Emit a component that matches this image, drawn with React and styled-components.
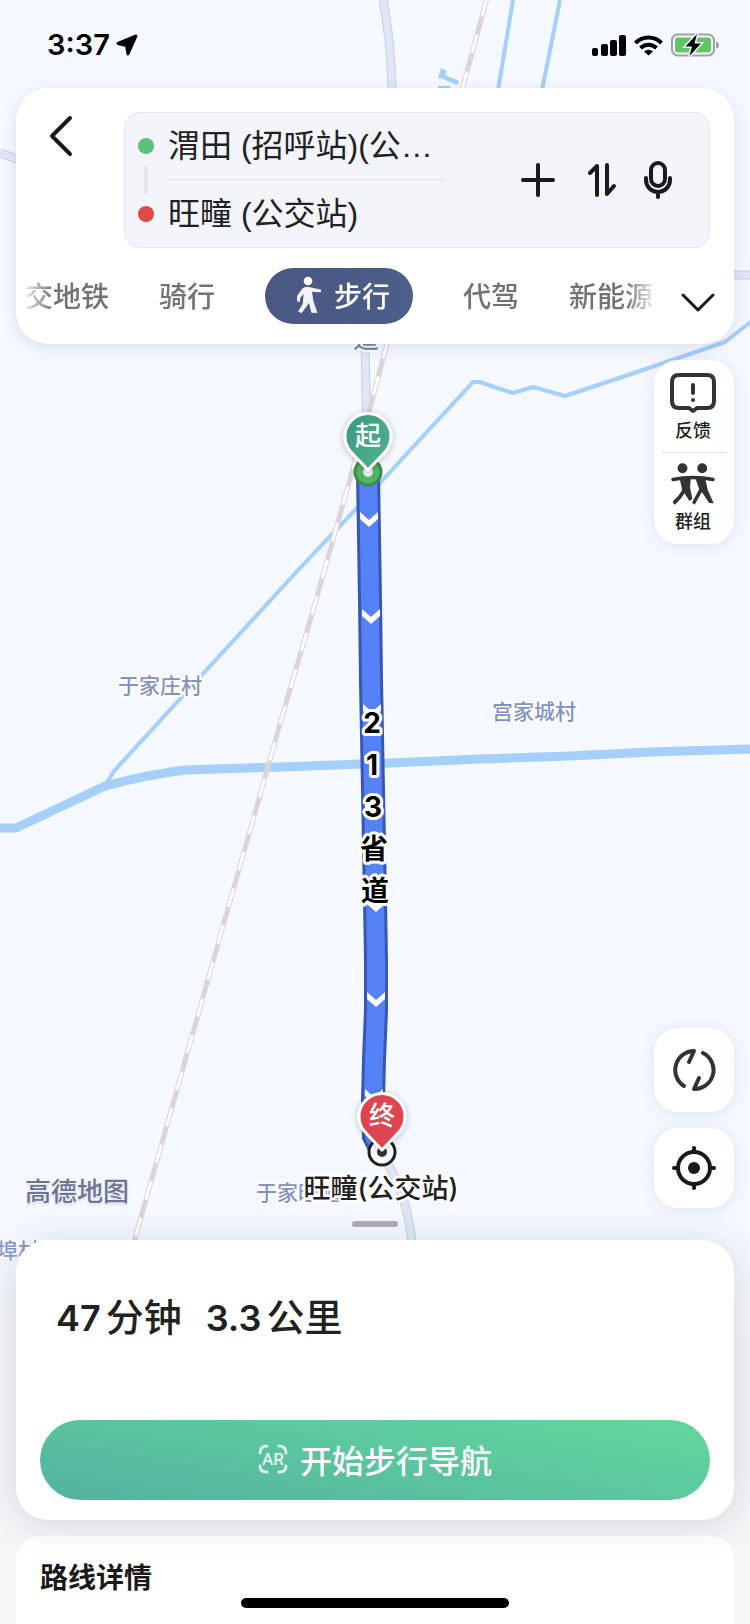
import React from "react";
import styled, { createGlobalStyle, css } from "styled-components";

const GlobalStyle = createGlobalStyle`
  * { box-sizing: border-box; }
  body {
    margin: 0;
    background: #f5f6f8;
    color: #222;
    font-family: Inter, "Noto Sans CJK SC", sans-serif;
  }
  button, input { font: inherit; color: inherit; }
  svg { display: block; }
`;

const Page = styled.div`
  position: relative;
  isolation: isolate;
  display: flex;
  flex-direction: column;
  min-height: 100vh;
  overflow: hidden;
  background: #f5f8ff;
`;

const MapCanvas = styled.svg`
  position: absolute;
  inset: 0;
  z-index: -1;
  width: 100%;
  height: 100%;
`;

const StatusBar = styled.header`
  display: flex;
  align-items: center;
  justify-content: space-between;
  height: 88px;
  padding: 2px 30px 0 47px;
  color: #000;
`;

const StatusGroup = styled.div`
  display: flex;
  align-items: center;
  gap: ${(p) => p.$gap}px;
`;

const Clock = styled.time`
  font-size: 29px;
  font-weight: 600;
  line-height: 32px;
`;

const RouteCard = styled.section`
  margin: 0 16px;
  padding: 24px 0 20px;
  border-radius: 32px;
  background: #fff;
  box-shadow: 0 4px 16px rgba(40, 50, 80, 0.12);
`;

const RouteTop = styled.div`
  display: flex;
  align-items: flex-start;
  padding: 0 24px 0 16px;
`;

const IconButton = styled.button`
  display: flex;
  align-items: center;
  justify-content: center;
  flex: none;
  width: ${(p) => p.$width}px;
  height: ${(p) => p.$height}px;
  padding: 0;
  border: 0;
  background: none;
  color: #1a1a1a;
`;

const MoreButton = styled(IconButton)`
  align-items: flex-end;
  padding-bottom: 12px;
`;

const FieldBox = styled.div`
  display: flex;
  align-items: center;
  flex: 1;
  min-width: 0;
  height: 136px;
  margin-left: 34px;
  padding: 0 35px 0 13px;
  border: 1px solid #e6e7eb;
  border-radius: 16px;
  background: #f4f5fa;
`;

const RouteMarks = styled.div`
  display: flex;
  flex-direction: column;
  align-items: center;
  gap: 12px;
  flex: none;
`;

const Dot = styled.span`
  width: 16px;
  height: 16px;
  border-radius: 50%;
  background: ${(p) => p.$color};
`;

const Connector = styled.span`
  width: 4px;
  height: 28px;
  background: #e6e6ea;
`;

const Fields = styled.div`
  flex: 1;
  min-width: 0;
  margin-left: 14px;
`;

const Field = styled.input`
  display: block;
  width: 100%;
  height: 68px;
  padding: 0 0 5px;
  border: 0;
  border-bottom: 1px solid ${(p) => (p.$last ? "transparent" : "#e3e4e8")};
  outline: 0;
  background: none;
  color: #222;
  font-family: "Liberation Sans", "Noto Sans CJK SC", sans-serif;
  font-size: 32px;
`;

const FieldActions = styled.div`
  display: flex;
  align-items: center;
  gap: 16px;
  flex: none;
  margin-left: 70px;
`;

const TabRow = styled.div`
  display: flex;
  align-items: center;
  justify-content: space-between;
  margin-top: 20px;
  padding: 0 16px 0 9px;
`;

const Tabs = styled.nav`
  display: flex;
  align-items: center;
  gap: 50px;
  min-width: 0;
  overflow: hidden;
  mask-image: linear-gradient(90deg, rgba(0, 0, 0, 0.15), #000 28px, #000 calc(100% - 28px), rgba(0, 0, 0, 0.15));
`;

const Tab = styled.button`
  display: flex;
  align-items: center;
  justify-content: center;
  flex: none;
  gap: 12px;
  height: 56px;
  padding: 0 0 2px;
  border: 0;
  background: none;
  color: #737373;
  font-size: 28px;
  font-weight: 500;
  white-space: nowrap;
  ${(p) =>
    p.$active &&
    css`
      width: 148px;
      padding-left: 8px;
      border-radius: 28px;
      background: linear-gradient(90deg, #485882, #4d5e8a);
      color: #fff;
    `}
`;

const MapArea = styled.main`
  display: flex;
  flex: 1;
  flex-direction: column;
  justify-content: space-between;
  min-height: 560px;
  padding: 16px 16px 13px;
`;

const floating = css`
  border: 0;
  border-radius: 24px;
  background: #fff;
  box-shadow: 0 2px 16px rgba(40, 50, 80, 0.1);
`;

const ToolPanel = styled.div`
  ${floating}
  align-self: flex-end;
  width: 80px;
  padding: 0 8px;
`;

const ToolButton = styled.button`
  display: flex;
  flex-direction: column;
  align-items: center;
  gap: 5px;
  width: 100%;
  height: 92px;
  padding: ${(p) => (p.$divided ? 10 : 12)}px 2px 0 0;
  border: 0;
  border-top: ${(p) => (p.$divided ? "1px solid #e2e2e4" : "0")};
  background: none;
  color: #222;
  font-size: 18px;
  font-weight: 500;
  line-height: 24px;
`;

const MapFooter = styled.div`
  display: flex;
  flex-direction: column;
  gap: 13px;
`;

const MapFooterRow = styled.div`
  display: flex;
  align-items: flex-end;
  justify-content: space-between;
`;

const Watermark = styled.span`
  margin-left: 9px;
  color: #6c7694;
  font-size: 26px;
  font-weight: 500;
  line-height: 32px;
  text-shadow: 0 1px 2px #fff, 0 2px 2px rgba(60, 70, 100, 0.25);
`;

const Controls = styled.div`
  display: flex;
  flex-direction: column;
  gap: 16px;
`;

const ControlButton = styled.button`
  ${floating}
  display: flex;
  align-items: center;
  justify-content: center;
  width: 80px;
  height: ${(p) => p.$height}px;
  padding: 0;
`;

const Handle = styled.span`
  align-self: center;
  width: 46px;
  height: 6px;
  border-radius: 3px;
  background: #adaeb3;
`;

const SheetStack = styled.div`
  position: relative;
  display: flex;
  flex-direction: column;
  gap: 16px;
  padding: 0 16px;
  background: linear-gradient(rgba(245, 246, 248, 0), #f5f6f8 100px);
`;

const Summary = styled.section`
  position: relative;
  padding: 54px 24px 20px;
  border-radius: 32px;
  background: #fff;
  box-shadow: 0 4px 36px rgba(50, 54, 66, 0.17);
`;

const SummaryFigures = styled.h1`
  display: flex;
  gap: 24px;
  height: 46px;
  margin: 0 0 80px 16px;
  font-size: 36px;
  font-weight: 600;
  line-height: 46px;
`;

const Figure = styled.span`
  display: flex;
  align-items: baseline;
  gap: 5px;
`;

const Unit = styled.span`
  font-size: 38px;
  font-weight: 500;
`;

const StartButton = styled.button`
  display: flex;
  align-items: center;
  justify-content: center;
  gap: 12px;
  width: 100%;
  height: 80px;
  padding: 0 0 2px;
  border: 0;
  border-radius: 40px;
  background: linear-gradient(10deg, #54b59f 8%, #5bc59f 50%, #61d59d 92%);
  color: #fff;
  font-size: 32px;
  font-weight: 500;
`;

const Details = styled.section`
  height: 88px;
  padding: 25px 24px 0;
  border-radius: 24px 24px 0 0;
  background: #fff;
`;

const DetailsTitle = styled.h2`
  margin: 0;
  color: #1a1a1a;
  font-size: 28px;
  font-weight: 600;
  line-height: 34px;
`;

const HomeIndicator = styled.div`
  position: absolute;
  bottom: 16px;
  left: 50%;
  width: 268px;
  height: 10px;
  border-radius: 5px;
  background: #000;
  transform: translateX(-50%);
`;

const PlaceText = styled.text`
  fill: ${(p) => p.$color || "#8292c2"};
  stroke: #fff;
  stroke-width: ${(p) => p.$halo || 4}px;
  stroke-linejoin: round;
  paint-order: stroke;
  text-anchor: middle;
  font-size: ${(p) => p.$size || 21}px;
  font-weight: ${(p) => p.$weight || 500};
`;

const PinText = styled.text`
  fill: #fff;
  text-anchor: middle;
  font-size: 26px;
  font-weight: 500;
`;

const ROUTE = "M368 472L370 600L371 680L375 900L376 960L376 1010L374 1060L373 1100L374 1136L382 1152";
const CHEVRONS = [[369, 519], [371, 616], [372, 711], [374, 808], [376, 904], [376, 999], [374, 1096]];
const ROAD_NAME = [["2", 372, 733], ["1", 372, 775], ["3", 373, 817], ["省", 374, 859], ["道", 375, 901]];
const PLACES = [["于家庄村", 160, 693], ["宫家城村", 534, 719], ["于家旺疃", 298, 1200], ["埠村", 18, 1258]];
const ROADS = [
  "M383 0Q391 40 392 90",
  "M365 340L367 440",
  "M384 1158C402 1186 409 1212 413 1250",
  "M0 153L20 160",
  "M730 275L750 275",
];

function Pin({ x, y, fill, children }) {
  return (
    <g transform={`translate(${x} ${y})`}>
      <path
        d="M0 34L-17 16A23 23 0 1 1 17 16Z"
        fill={fill}
        stroke="#fff"
        strokeWidth="3"
        strokeLinejoin="round"
        filter="url(#pinShadow)"
      />
      <PinText y="9">{children}</PinText>
    </g>
  );
}

function RouteMap() {
  return (
    <MapCanvas viewBox="0 0 750 1624" preserveAspectRatio="xMidYMid slice">
      <defs>
        <filter id="pinShadow" x="-30%" y="-30%" width="160%" height="160%">
          <feDropShadow dx="0" dy="1" stdDeviation="3" floodOpacity="0.25" />
        </filter>
        <linearGradient id="startFill" x1="0" y1="0" x2="1" y2="1">
          <stop offset="0" stopColor="#3c977a" />
          <stop offset="1" stopColor="#4db694" />
        </linearGradient>
      </defs>
      <g fill="none">
        {ROADS.map((d) => (
          <g key={d}>
            <path d={d} stroke="#c6d0e5" strokeWidth="9" />
            <path d={d} stroke="#dfe7f6" strokeWidth="7" />
          </g>
        ))}
        <g stroke="#a6cffb" strokeLinejoin="round">
          <path d="M0 828H16L105 786Q145 775 185 770L280 767L390 763L480 759L570 756L650 752L750 749" strokeWidth="9" />
          <path d="M105 786L114 771L300 568L356 509L473 382H480L500 389L513 393L533 387L565 396L640 371L725 342L752 321" strokeWidth="4" />
          <path d="M513 0L498 90M560 0L542 90" strokeWidth="4" />
        </g>
        {["M487 -2L462 90", "M388 340L370 408L316 600L280 724L134 1242"].map((d) => (
          <g key={d}>
            <path d={d} stroke="#dbd5d9" strokeWidth="5" />
            <path d={d} stroke="#fff" strokeWidth="3" strokeDasharray="19 19" />
          </g>
        ))}
        <path d="M438 78L441 68L447 71L445 75L459 81L457 85L443 79ZM438 86H450V90H438Z" fill="#a6cffb" />
        <path d={ROUTE} stroke="#3858b0" strokeWidth="24" />
        <path d={ROUTE} stroke="#5682f8" strokeWidth="18" />
      </g>
      {CHEVRONS.map(([x, y]) => (
        <path key={y} transform={`translate(${x} ${y})`} d="M-9 -7L0 1L9 -7V0L0 8L-9 0Z" fill="#fff" />
      ))}
      <PlaceText x="366" y="348" $color="#7c88ab" $size={26}>道</PlaceText>
      {PLACES.map(([name, x, y]) => (
        <PlaceText key={name} x={x} y={y}>{name}</PlaceText>
      ))}
      {ROAD_NAME.map(([char, x, y]) => (
        <PlaceText key={char} x={x} y={y} $color="#000" $size={28} $weight={700} $halo={6}>{char}</PlaceText>
      ))}
      <circle cx="368" cy="472" r="13" fill="#54b267" stroke="#3b8d4e" strokeWidth="3" />
      <circle cx="368" cy="472" r="5" fill="#e3f3e6" />
      <circle cx="382" cy="1152" r="13" fill="#fff" stroke="#222" strokeWidth="3" />
      <circle cx="382" cy="1152" r="5" fill="#333" />
      <Pin x={368} y={436} fill="url(#startFill)">起</Pin>
      <Pin x={382} y={1116} fill="#de444f">终</Pin>
      <PlaceText x="381" y="1198" $color="#222" $size={27} $weight={500} $halo={5}>旺疃(公交站)</PlaceText>
    </MapCanvas>
  );
}

const LocationArrow = () => (
  <svg width="22" height="22" viewBox="0 0 22 22">
    <path d="M20 2L2 9.5L10.500 11.500L12 20Z" fill="#000" stroke="#000" strokeWidth="3" strokeLinejoin="round" />
  </svg>
);

const Signal = () => (
  <svg width="34" height="21" viewBox="0 0 34 21">
    <rect y="13" width="6" height="8" rx="2" />
    <rect x="9" y="9" width="7" height="12" rx="2" />
    <rect x="18" y="5" width="7" height="16" rx="2" />
    <rect x="27" width="7" height="21" rx="2" />
  </svg>
);

const Wifi = () => (
  <svg width="29" height="21" viewBox="0 0 29 21">
    <g fill="none" stroke="#000" strokeWidth="4">
      <path d="M1.500 8A18 18 0 0 1 27.500 8" />
      <path d="M6.500 13A11.500 11.500 0 0 1 22.500 13" />
    </g>
    <path d="M14.500 20.500L10 16.500Q14.500 13 19 16.500Z" />
  </svg>
);

const Battery = () => (
  <svg width="49" height="24" viewBox="0 0 49 24">
    <rect x="1" y="1.500" width="42" height="21" rx="6" fill="none" stroke="#9fa1a6" strokeWidth="2" />
    <rect x="4" y="4.500" width="36" height="15" rx="3" fill="#65c466" />
    <path d="M45 8.500Q48 9 48 12T45 15.500Z" fill="#9fa1a6" />
    <path d="M26 1L14.500 13.500H21L18.500 23L30 10.500H23.500Z" fill="#000" stroke="#f4f8ff" strokeWidth="3" paintOrder="stroke" />
  </svg>
);

const line = { fill: "none", stroke: "currentColor", strokeLinecap: "round", strokeLinejoin: "round" };

const BackIcon = () => (
  <svg width="24" height="42" viewBox="0 0 24 42" {...line} strokeWidth="4">
    <path d="M21 3L3 21L21 39" />
  </svg>
);
const PlusIcon = () => (
  <svg width="34" height="34" viewBox="0 0 34 34" {...line} strokeWidth="4">
    <path d="M2 17H32M17 2V32" />
  </svg>
);
const SwapIcon = () => (
  <svg width="30" height="34" viewBox="0 0 30 34" {...line} strokeWidth="4">
    <path d="M3 10L10 3V32M20 2V31L27 23" />
  </svg>
);
const MicIcon = () => (
  <svg width="30" height="40" viewBox="0 0 30 40" {...line} strokeWidth="4">
    <rect x="8" y="3" width="14" height="23" rx="7" />
    <path d="M3 18V20A12 12 0 0 0 27 20V18M15 33V37" />
  </svg>
);
const DownIcon = () => (
  <svg width="34" height="20" viewBox="0 0 34 20" {...line} strokeWidth="3">
    <path d="M2 3L17 18L32 3" />
  </svg>
);
const WalkIcon = () => (
  <svg width="26" height="38" viewBox="0 0 78 114" fill="#fff">
    <circle cx="36" cy="15" r="13" />
    <path d="M20 37Q30 29 42 34L76 41L74 49L48 47L52 74L64 111L46 110L39 81L30 94L17 111L6 107L20 84L23 54L13 65L11 78L3 76V60Z" fillOpacity="0.93" />
  </svg>
);
const FeedbackIcon = () => (
  <svg width="46" height="42" viewBox="0 -1 46 42" fill="none" stroke="#333" strokeWidth="4" strokeLinecap="round" strokeLinejoin="round">
    <path d="M9 2H37Q44 2 44 9V28Q44 35 37 35H27L23 38L19 35H9Q2 35 2 28V9Q2 2 9 2Z" />
    <path d="M23 12V20M23 27V27.100" />
  </svg>
);
const GroupIcon = () => (
  <svg width="46" height="42" viewBox="0 2 138 128" fill="#333">
    <circle cx="37" cy="18" r="15" />
    <circle cx="97" cy="18" r="15" />
    <path d="M8 52Q70 40 130 52" fill="none" stroke="#333" strokeWidth="11" strokeLinecap="round" />
    <path d="M28 48H62L60 76L67 111L58 118L43 94L34 108L14 129L7 123L10 116L25 101L36 84Z" />
    <path d="M76 48H106L114 84L132 125L118 124L96 90L74 129L66 123L78 100L88 82Z" />
  </svg>
);
const RefreshIcon = () => (
  <svg width="44" height="44" viewBox="0 0 44 44" fill="none" stroke="#333" strokeWidth="4" strokeLinecap="round" strokeLinejoin="round">
    <path d="M12 38A19 19 0 0 1 22 3L17 14M31 5A19 19 0 0 1 22 41L27 30" />
  </svg>
);
const LocateIcon = () => (
  <svg width="44" height="44" viewBox="0 0 44 44" fill="none" stroke="#1a1a1a" strokeWidth="4" strokeLinecap="round">
    <circle cx="22" cy="22" r="16" />
    <circle cx="22" cy="22" r="6" fill="#1a1a1a" stroke="none" />
    <path d="M22 2V6M22 38V42M2 22H6M38 22H42" />
  </svg>
);

const ArText = styled.text`
  fill: #e6f6f0;
  stroke: none;
  text-anchor: middle;
  font-family: Roboto, sans-serif;
  font-size: 17px;
  font-weight: 500;
`;

const ArIcon = () => (
  <svg width="30" height="30" viewBox="0 0 30 30" fill="none" stroke="#d9f1e9" strokeWidth="3" strokeLinecap="round">
    <path d="M2 9Q2 2 9 2M21 2Q28 2 28 9M28 22Q28 28 21 28M9 28Q2 28 2 22" />
    <ArText x="15" y="21">AR</ArText>
  </svg>
);

export default function App() {
  return (
    <Page>
      <GlobalStyle />
      <RouteMap />
      <StatusBar>
        <StatusGroup $gap={6}>
          <Clock>3:37</Clock>
          <LocationArrow />
        </StatusGroup>
        <StatusGroup $gap={8}>
          <Signal />
          <Wifi />
          <Battery />
        </StatusGroup>
      </StatusBar>

      <RouteCard>
        <RouteTop>
          <IconButton $width={58} $height={48} aria-label="返回"><BackIcon /></IconButton>
          <FieldBox>
            <RouteMarks>
              <Dot $color="#5bc278" />
              <Connector />
              <Dot $color="#de4941" />
            </RouteMarks>
            <Fields>
              <Field aria-label="起点" defaultValue="渭田 (招呼站)(公…" />
              <Field $last aria-label="终点" defaultValue="旺疃 (公交站)" />
            </Fields>
            <FieldActions>
              <IconButton $width={48} $height={48} aria-label="添加途经点"><PlusIcon /></IconButton>
              <IconButton $width={48} $height={48} aria-label="交换起终点"><SwapIcon /></IconButton>
              <IconButton $width={32} $height={48} aria-label="语音输入"><MicIcon /></IconButton>
            </FieldActions>
          </FieldBox>
        </RouteTop>
        <TabRow>
          <Tabs>
            <Tab>交地铁</Tab>
            <Tab>骑行</Tab>
            <Tab $active><WalkIcon />步行</Tab>
            <Tab>代驾</Tab>
            <Tab>新能源</Tab>
          </Tabs>
          <MoreButton $width={40} $height={56} aria-label="更多出行方式"><DownIcon /></MoreButton>
        </TabRow>
      </RouteCard>

      <MapArea>
        <ToolPanel>
          <ToolButton><FeedbackIcon />反馈</ToolButton>
          <ToolButton $divided><GroupIcon />群组</ToolButton>
        </ToolPanel>
        <MapFooter>
          <MapFooterRow>
            <Watermark>高德地图</Watermark>
            <Controls>
              <ControlButton $height={84} aria-label="刷新路线"><RefreshIcon /></ControlButton>
              <ControlButton $height={80} aria-label="定位"><LocateIcon /></ControlButton>
            </Controls>
          </MapFooterRow>
          <Handle />
        </MapFooter>
      </MapArea>

      <SheetStack>
        <Summary>
          <SummaryFigures>
            <Figure>47<Unit>分钟</Unit></Figure>
            <Figure>3.3<Unit>公里</Unit></Figure>
          </SummaryFigures>
          <StartButton><ArIcon />开始步行导航</StartButton>
        </Summary>
        <Details>
          <DetailsTitle>路线详情</DetailsTitle>
        </Details>
        <HomeIndicator />
      </SheetStack>
    </Page>
  );
}
